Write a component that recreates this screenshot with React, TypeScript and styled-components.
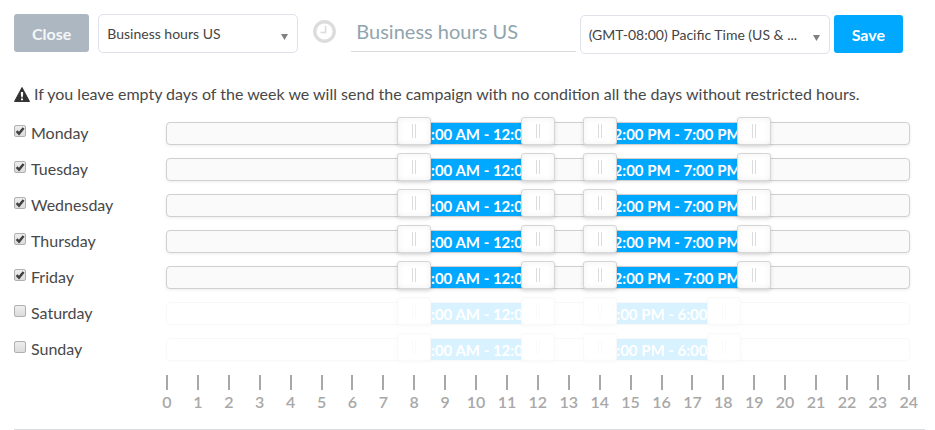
import React, { useState } from "react";
import styled, { createGlobalStyle } from "styled-components";

const HOURS = 24;

type Range = [number, number];
interface Day {
  name: string;
  active: boolean;
  ranges: Range[];
}

const weekday = (name: string): Day => ({ name, active: true, ranges: [[8, 12], [14, 19]] });
const weekend = (name: string): Day => ({ name, active: false, ranges: [[8, 12], [14, 18]] });

const INITIAL_DAYS: Day[] = [
  weekday("Monday"),
  weekday("Tuesday"),
  weekday("Wednesday"),
  weekday("Thursday"),
  weekday("Friday"),
  weekend("Saturday"),
  weekend("Sunday"),
];

const formatHour = (hour: number) =>
  `${hour % 12 === 0 ? 12 : hour % 12}:00 ${hour % 24 < 12 ? "AM" : "PM"}`;

const GlobalStyle = createGlobalStyle`
  * { box-sizing: border-box; }
  body {
    margin: 0;
    background: #fff;
    color: #484848;
    font-family: Lato, "Open Sans", sans-serif;
    font-size: 16px;
    line-height: 24px;
  }
  button, input, select { font-family: inherit; }
`;

const Page = styled.main`
  padding: 14px 10px 0 14px;
`;

const Toolbar = styled.header`
  display: flex;
  align-items: flex-start;
  padding-right: 22px;
`;

const Button = styled.button<{ $primary?: boolean }>`
  flex: none;
  height: 38px;
  padding: 0 18px;
  border: 0;
  border-radius: 3px;
  background: ${(p) => (p.$primary ? "#00a8ff" : "#adb7c1")};
  color: ${(p) => (p.$primary ? "#fff" : "#f4f6f8")};
  font-size: 16px;
  font-weight: 700;
  cursor: pointer;
`;

const ScheduleGroup = styled.div`
  display: flex;
  gap: 9px;
`;

const SelectBox = styled.div<{ $width: number }>`
  flex: none;
  width: ${(p) => p.$width}px;
  display: grid;
  align-items: center;
  > * { grid-area: 1 / 1; }
`;

const Select = styled.select`
  appearance: none;
  width: 100%;
  height: 39px;
  padding: 0 30px 0 8px;
  border: 1px solid #e1e1ec;
  border-radius: 5px;
  background: #fff;
  color: #444;
  font-size: 14px;
  text-overflow: ellipsis;
`;

const Arrow = styled.svg`
  justify-self: end;
  margin: 6px 10px 0 0;
  pointer-events: none;
`;

const ClockIcon = styled.svg`
  flex: none;
  margin: 6px 15px 0;
`;

const NameInput = styled.input`
  flex: 1 1 0;
  min-width: 0;
  height: 38px;
  margin-right: 4px;
  padding: 0 5px 4px;
  border: 0;
  border-bottom: 1px solid #d9dcde;
  background: transparent;
  color: #90a4ae;
  font-size: 20px;
  outline: none;
`;

const TimezoneGroup = styled.div`
  display: flex;
  gap: 4px;
  padding-top: 1px;
`;

const Notice = styled.p`
  display: flex;
  align-items: center;
  gap: 4px;
  margin: 28px 0 15px;
`;

const Schedule = styled.section`
  display: flex;
  flex-direction: column;
  gap: 12px;
  padding-right: 15px;
`;

const DayRow = styled.div`
  display: grid;
  grid-template-columns: 152px 1fr;
  align-items: center;
  height: 24px;
`;

const DayLabel = styled.label`
  display: flex;
  align-items: center;
  gap: 5px;
`;

const CheckBox = styled.span`
  display: grid;
  margin-bottom: 4px;
  > * { grid-area: 1 / 1; }
`;

const CheckInput = styled.input`
  appearance: none;
  width: 12px;
  height: 12px;
  margin: 0;
  border: 1px solid #b0b0b0;
  border-radius: 2px;
  background: linear-gradient(#eee, #dcdcdc);
  &:not(:checked) + svg { visibility: hidden; }
`;

const CheckMark = styled.svg`
  pointer-events: none;
`;

const Track = styled.div<{ $faded: boolean }>`
  position: relative;
  height: 23px;
  border: 1px solid #d0d0d0;
  border-radius: 4px;
  background: #fafafa;
  box-shadow: 0 1px 3px rgba(0, 0, 0, 0.08);
  opacity: ${(p) => (p.$faded ? 0.15 : 1)};
`;

const Segment = styled.div`
  position: absolute;
  top: 0;
  bottom: 0;
  padding: 0 8px;
  overflow: hidden;
  background: #00a8ff;
  color: #fff;
  font-size: 15px;
  font-weight: 700;
  line-height: 22px;
  text-align: center;
  white-space: nowrap;
`;

const Handle = styled.input`
  appearance: none;
  position: absolute;
  top: -6px;
  left: -17px;
  width: calc(100% + 34px);
  height: 28px;
  margin: 0;
  background: transparent;
  pointer-events: none;

  &::-webkit-slider-thumb {
    appearance: none;
    width: 34px;
    height: 28px;
    border: 1px solid #d6d6d6;
    border-radius: 3px;
    background:
      linear-gradient(#dcdcdc, #dcdcdc) 14px 6px / 1px 14px no-repeat,
      linear-gradient(#dcdcdc, #dcdcdc) 17px 6px / 1px 14px no-repeat,
      #fff;
    box-shadow: inset 0 0 6px rgba(0, 0, 0, 0.06), 0 2px 4px rgba(0, 0, 0, 0.12);
    cursor: ew-resize;
    pointer-events: auto;
  }
`;

const Axis = styled.div`
  display: flex;
  justify-content: space-between;
  margin: 14px 15px 0 152px;
`;

const Tick = styled.div`
  display: flex;
  flex-direction: column;
  align-items: center;
  width: 2px;
  color: #a8a8a8;
  font-weight: 600;
  line-height: 24px;
  &::before {
    content: "";
    width: 2px;
    height: 15px;
    background: #a8a8a8;
  }
`;

const Divider = styled.hr`
  margin: 15px 0 0;
  border: 0;
  border-top: 1px solid #d9dde0;
`;

function DropDown({ label, value, width }: { label: string; value: string; width: number }) {
  return (
    <SelectBox $width={width}>
      <Select aria-label={label} defaultValue={value}>
        <option>{value}</option>
      </Select>
      <Arrow width="7" height="6" viewBox="0 0 7 6" aria-hidden="true">
        <path d="M0 0h7L3.5 6z" fill="#808080" />
      </Arrow>
    </SelectBox>
  );
}

export default function App() {
  const [days, setDays] = useState(INITIAL_DAYS);
  const [name, setName] = useState("Business hours US");

  const toggle = (index: number) =>
    setDays((all) => all.map((d, i) => (i === index ? { ...d, active: !d.active } : d)));

  const move = (index: number, rangeIndex: number, edge: 0 | 1, hour: number) =>
    setDays((all) =>
      all.map((d, i) => {
        if (i !== index) return d;
        const ranges = d.ranges.map((r, j): Range => {
          if (j !== rangeIndex) return r;
          return edge === 0 ? [Math.min(hour, r[1]), r[1]] : [r[0], Math.max(hour, r[0])];
        });
        return { ...d, ranges };
      })
    );

  return (
    <>
      <GlobalStyle />
      <Page>
        <Toolbar>
          <ScheduleGroup>
            <Button type="button">Close</Button>
            <DropDown label="Saved schedule" value="Business hours US" width={200} />
          </ScheduleGroup>
          <ClockIcon width="23" height="23" viewBox="0 0 23 23" fill="none" stroke="#dcdcdc" aria-hidden="true">
            <circle cx="11.5" cy="11.5" r="9.7" strokeWidth="3.4" />
            <path d="M12.5 6v6.5H7.5" strokeWidth="1.6" />
          </ClockIcon>
          <NameInput aria-label="Schedule name" value={name} onChange={(e) => setName(e.target.value)} />
          <TimezoneGroup>
            <DropDown label="Time zone" value="(GMT-08:00) Pacific Time (US & ..." width={250} />
            <Button type="button" $primary>Save</Button>
          </TimezoneGroup>
        </Toolbar>

        <Notice>
          <svg width="16" height="15" viewBox="0 0 16 15" aria-hidden="true">
            <path d="M8 .5 15.5 14.5H.5z" fill="#333" stroke="#333" strokeLinejoin="round" />
            <path d="M6.9 5h2.2v3L8.6 10.5H7.4L6.9 8zM7 11.5h2v1.7H7z" fill="#fff" />
          </svg>
          <span>
            If you leave empty days of the week we will send the campaign with no condition all the days
            without restricted hours.
          </span>
        </Notice>

        <Schedule>
          {days.map((day, index) => (
            <DayRow key={day.name}>
              <DayLabel>
                <CheckBox>
                  <CheckInput type="checkbox" checked={day.active} onChange={() => toggle(index)} />
                  <CheckMark width="12" height="12" viewBox="0 0 12 12" aria-hidden="true">
                    <path d="M2.6 6.2 5 8.6 9.6 3" fill="none" stroke="#404040" strokeWidth="2.4" />
                  </CheckMark>
                </CheckBox>
                {day.name}
              </DayLabel>
              <Track $faded={!day.active}>
                {day.ranges.map(([from, to], r) => (
                  <Segment
                    key={r}
                    style={{ left: `${(from / HOURS) * 100}%`, width: `${((to - from) / HOURS) * 100}%` }}
                  >
                    {formatHour(from)} - {formatHour(to)}
                  </Segment>
                ))}
                {day.ranges.flatMap((range, r) =>
                  ([0, 1] as const).map((edge) => (
                    <Handle
                      key={`${r}-${edge}`}
                      type="range"
                      min={0}
                      max={HOURS}
                      value={range[edge]}
                      disabled={!day.active}
                      aria-label={`${day.name} period ${r + 1} ${edge === 0 ? "start" : "end"}`}
                      onChange={(e) => move(index, r, edge, Number(e.target.value))}
                    />
                  ))
                )}
              </Track>
            </DayRow>
          ))}
        </Schedule>

        <Axis>
          {Array.from({ length: HOURS + 1 }, (_, hour) => (
            <Tick key={hour}>{hour}</Tick>
          ))}
        </Axis>
        <Divider />
      </Page>
    </>
  );
}
